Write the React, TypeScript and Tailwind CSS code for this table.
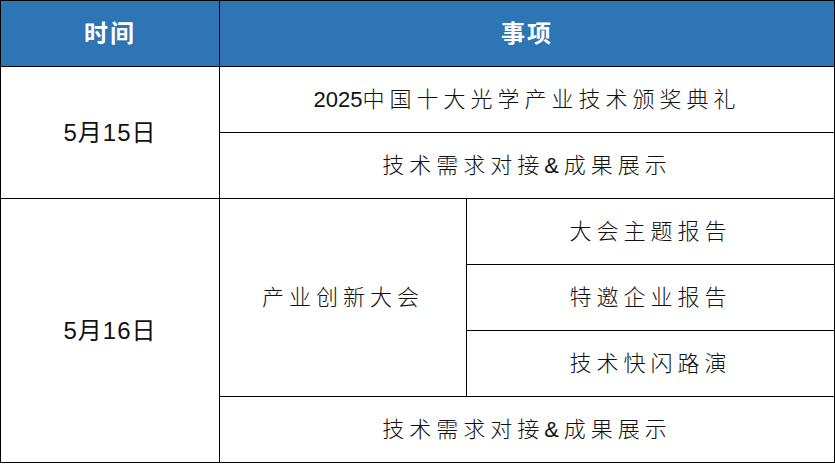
const font = { fontFamily: '"Liberation Sans", "Noto Sans CJK SC", sans-serif' };

function Cn({ children }: { children: string }) {
  // digits stay tight, CJK characters get wide tracking
  const parts = children.split(/(\d+)/).filter(Boolean);
  return (
    <>
      {parts.map((p, i) =>
        /^\d+$/.test(p) ? (
          <span key={i} className="tracking-normal">{p}</span>
        ) : (
          <span key={i} className="tracking-[5px]">{p}</span>
        )
      )}
    </>
  );
}

const td = "border border-black text-center align-middle h-[66px] text-[22px] font-light text-[#111]";
const date = "border border-black text-center align-middle text-[24px] text-[#111] tracking-[1px]";

export default function App() {
  return (
    <div className="bg-white w-[835px] h-[464px]" style={font}>
      <table className="border-collapse table-fixed w-[834px]">
        <colgroup>
          <col className="w-[219px]" />
          <col className="w-[247px]" />
          <col className="w-[368px]" />
        </colgroup>
        <thead>
          <tr>
            <th className="border border-black bg-[#2e75b6] text-white text-[24px] font-bold h-[66px] tracking-[2px]">时间</th>
            <th colSpan={2} className="border border-black bg-[#2e75b6] text-white text-[24px] font-bold h-[66px] tracking-[2px]">事项</th>
          </tr>
        </thead>
        <tbody>
          <tr>
            <td rowSpan={2} className={date}>5月15日</td>
            <td colSpan={2} className={td}><Cn>2025中国十大光学产业技术颁奖典礼</Cn></td>
          </tr>
          <tr>
            <td colSpan={2} className={td}><Cn>技术需求对接&成果展示</Cn></td>
          </tr>
          <tr>
            <td rowSpan={4} className={date}>5月16日</td>
            <td rowSpan={3} className={td}><Cn>产业创新大会</Cn></td>
            <td className={td}><Cn>大会主题报告</Cn></td>
          </tr>
          <tr>
            <td className={td}><Cn>特邀企业报告</Cn></td>
          </tr>
          <tr>
            <td className={td}><Cn>技术快闪路演</Cn></td>
          </tr>
          <tr>
            <td colSpan={2} className={td}><Cn>技术需求对接&成果展示</Cn></td>
          </tr>
        </tbody>
      </table>
    </div>
  );
}
